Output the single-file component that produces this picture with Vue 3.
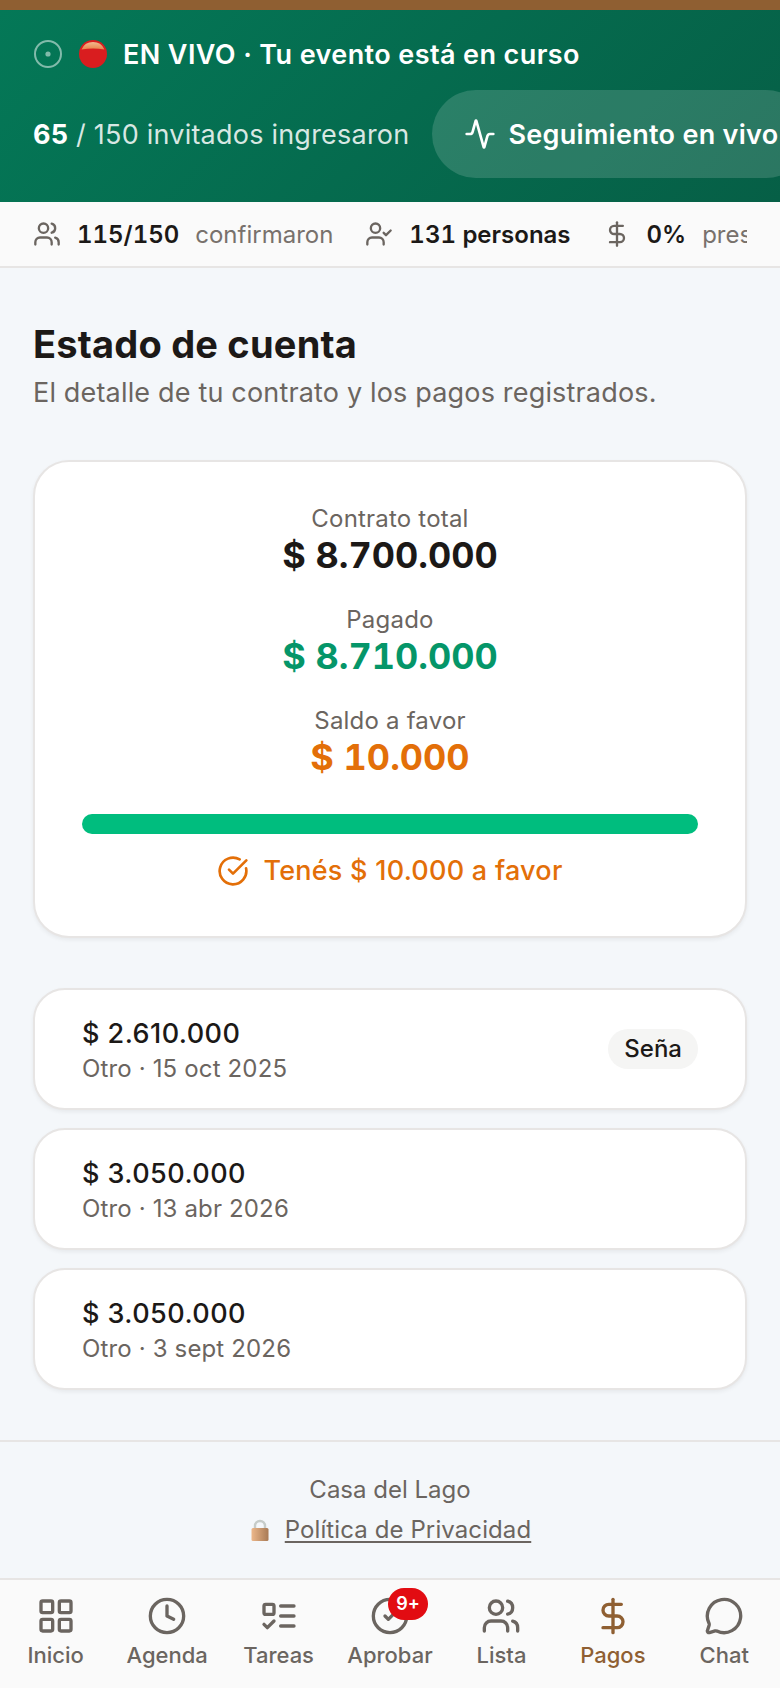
<template>
  <div class="page">
    <div class="topline"></div>
    <header class="live">
      <div class="live__row">
        <svg class="live__dot" viewBox="0 0 30 30" width="30" height="30"><circle cx="15" cy="15" r="13" fill="none" stroke="#fff" stroke-opacity=".5" stroke-width="2"/><circle cx="15" cy="15" r="2.6" fill="#fff" fill-opacity=".5"/></svg>
        <svg class="live__ball" viewBox="0 0 28 28" width="28" height="28">
          <defs>
            <linearGradient id="cap" x1="0" y1="0" x2="0" y2="1">
              <stop offset="0" stop-color="#f2b98e"/>
              <stop offset="1" stop-color="#e9824a"/>
            </linearGradient>
          </defs>
          <circle cx="14" cy="14" r="14" fill="#d91d1f"/>
          <path d="M2.5 9.5A12.6 12.6 0 0 1 25.5 9.5Q14 7.5 2.5 9.5Z" fill="url(#cap)"/>
        </svg>
        <span class="live__title">EN VIVO · Tu evento está en curso</span>
      </div>
      <div class="live__row live__row--second">
        <span class="live__count"><b>65</b> / 150 invitados ingresaron</span>
        <div class="live__btn">
          <svg viewBox="0 0 24 24" width="32" height="32" fill="none" stroke="#fff" stroke-width="2" stroke-linecap="round" stroke-linejoin="round"><path d="M22 12h-2.48a2 2 0 0 0-1.93 1.46l-2.35 8.36a.25.25 0 0 1-.48 0L9.24 2.18a.25.25 0 0 0-.48 0l-2.35 8.36A2 2 0 0 1 4.49 12H2"/></svg>
          <span>Seguimiento en vivo</span>
        </div>
      </div>
    </header>

    <div class="stats">
      <div class="stats__inner">
        <div class="stat">
          <svg viewBox="0 0 24 24" width="28" height="28" class="stat__icon"><path d="M16 21v-2a4 4 0 0 0-4-4H6a4 4 0 0 0-4 4v2"/><circle cx="9" cy="7" r="4"/><path d="M22 21v-2a4 4 0 0 0-3-3.87"/><path d="M16 3.13a4 4 0 0 1 0 7.75"/></svg>
          <b>115/150</b><span>confirmaron</span>
        </div>
        <div class="stat">
          <svg viewBox="0 0 24 24" width="28" height="28" class="stat__icon"><path d="M16 21v-2a4 4 0 0 0-4-4H6a4 4 0 0 0-4 4v2"/><circle cx="9" cy="7" r="4"/><path d="m16 11 2 2 4-4"/></svg>
          <b>131 personas</b>
        </div>
        <div class="stat">
          <svg viewBox="0 0 24 24" width="28" height="28" class="stat__icon"><line x1="12" y1="2" x2="12" y2="22"/><path d="M17 5H9.5a3.5 3.5 0 0 0 0 7h5a3.5 3.5 0 0 1 0 7H6"/></svg>
          <b>0%</b><span>presupuesto</span>
        </div>
      </div>
    </div>

    <main class="content">
      <h1 class="content__title">Estado de cuenta</h1>
      <p class="content__sub">El detalle de tu contrato y los pagos registrados.</p>

      <section class="summary">
        <div class="summary__item">
          <div class="summary__label">Contrato total</div>
          <div class="summary__value">$ 8.700.000</div>
        </div>
        <div class="summary__item">
          <div class="summary__label">Pagado</div>
          <div class="summary__value is-green">$ 8.710.000</div>
        </div>
        <div class="summary__item">
          <div class="summary__label">Saldo a favor</div>
          <div class="summary__value is-orange">$ 10.000</div>
        </div>
        <div class="summary__bar"></div>
        <div class="summary__note">
          <svg viewBox="0 0 24 24" width="32" height="32" fill="none" stroke="#e36f08" stroke-width="2" stroke-linecap="round" stroke-linejoin="round"><path d="M21.8 10A10 10 0 1 1 17 3.34"/><path d="m9 11 3 3L22 4"/></svg>
          <span>Tenés $ 10.000 a favor</span>
        </div>
      </section>

      <section class="payments">
        <div v-for="p in payments" :key="p.date" class="payment">
          <div>
            <div class="payment__amount">{{ p.amount }}</div>
            <div class="payment__meta">Otro · {{ p.date }}</div>
          </div>
          <span v-if="p.tag" class="payment__tag">{{ p.tag }}</span>
        </div>
      </section>
    </main>

    <footer class="foot">
      <div>Casa del Lago</div>
      <div class="foot__link">
        <svg viewBox="0 0 18 22" width="18" height="22">
          <defs>
            <linearGradient id="lock" x1="0" y1="0" x2="1" y2="0">
              <stop offset="0" stop-color="#ecb78a"/>
              <stop offset="1" stop-color="#a87a55"/>
            </linearGradient>
          </defs>
          <path d="M4 11V7a5 5 0 0 1 10 0v4" fill="none" stroke="#c6ccc9" stroke-width="2.4"/>
          <rect x="0.5" y="9" width="17" height="13" rx="1.5" fill="url(#lock)"/>
        </svg>
        <a>Política de Privacidad</a>
      </div>
    </footer>

    <nav class="nav">
      <div v-for="item in nav" :key="item.label" class="nav__item" :class="{ 'is-active': item.active }">
        <div class="nav__icon">
          <svg viewBox="0 0 24 24" width="40" height="40" fill="none" stroke="currentColor" stroke-width="2" stroke-linecap="round" stroke-linejoin="round" v-html="item.icon"></svg>
          <span v-if="item.badge" class="nav__badge">{{ item.badge }}</span>
        </div>
        <span class="nav__label">{{ item.label }}</span>
      </div>
    </nav>
  </div>
</template>

<script setup>
const payments = [
  { amount: '$ 2.610.000', date: '15 oct 2025', tag: 'Seña' },
  { amount: '$ 3.050.000', date: '13 abr 2026' },
  { amount: '$ 3.050.000', date: '3 sept 2026' }
];

const nav = [
  { label: 'Inicio', icon: '<rect x="3" y="3" width="7" height="7" rx="1"/><rect x="14" y="3" width="7" height="7" rx="1"/><rect x="3" y="14" width="7" height="7" rx="1"/><rect x="14" y="14" width="7" height="7" rx="1"/>' },
  { label: 'Agenda', icon: '<circle cx="12" cy="12" r="10"/><path d="M12 6v6l4 2"/>' },
  { label: 'Tareas', icon: '<rect x="3" y="5" width="6" height="6" rx="1"/><path d="m3 17 2 2 4-4"/><path d="M13 6h8"/><path d="M13 12h8"/><path d="M13 18h8"/>' },
  { label: 'Aprobar', badge: '9+', icon: '<circle cx="12" cy="12" r="10"/><path d="m9 12 2 2 4-4"/>' },
  { label: 'Lista', icon: '<path d="M16 21v-2a4 4 0 0 0-4-4H6a4 4 0 0 0-4 4v2"/><circle cx="9" cy="7" r="4"/><path d="M22 21v-2a4 4 0 0 0-3-3.87"/><path d="M16 3.13a4 4 0 0 1 0 7.75"/>' },
  { label: 'Pagos', active: true, icon: '<line x1="12" y1="2" x2="12" y2="22"/><path d="M17 5H9.5a3.5 3.5 0 0 0 0 7h5a3.5 3.5 0 0 1 0 7H6"/>' },
  { label: 'Chat', icon: '<path d="M2.992 16.342a2 2 0 0 1 .094 1.167l-1.065 3.29a1 1 0 0 0 1.236 1.168l3.413-.998a2 2 0 0 1 1.099.092 10 10 0 1 0-4.777-4.719"/>' }
];
</script>

<style>
html, body {
  margin: 0;
  background: #f4f7fa;
}
</style>

<style scoped>
.page {
  width: 780px;
  height: 1688px;
  overflow: hidden;
  display: flex;
  flex-direction: column;
  background: #f4f7fa;
  font-family: Inter, "Noto Sans", sans-serif;
  color: #1c1917;
}
.topline {
  height: 10px;
  background: #8f5f32;
}
.live {
  height: 192px;
  box-sizing: border-box;
  padding: 29px 0 0 33px;
  background: linear-gradient(135deg, #047857 0%, #065f46 100%);
  color: #fff;
  overflow: hidden;
}
.live__row {
  display: flex;
  align-items: center;
  gap: 16px;
  height: 30px;
}
.live__title {
  font-size: 27px;
  font-weight: 600;
  letter-spacing: 0.4px;
}
.live__row--second {
  margin-top: 21px;
  height: 88px;
  gap: 23px;
  white-space: nowrap;
}
.live__count {
  font-size: 27px;
  letter-spacing: 0.22px;
  color: rgba(255, 255, 255, 0.85);
}
.live__count b {
  color: #fff;
  font-weight: 700;
}
.live__btn {
  display: flex;
  align-items: center;
  gap: 12px;
  height: 88px;
  padding: 0 32px;
  border-radius: 44px;
  flex-shrink: 0;
  background: rgba(255, 255, 255, 0.15);
  font-size: 27px;
  font-weight: 600;
  letter-spacing: 0.3px;
}
.stats {
  height: 66px;
  box-sizing: border-box;
  padding: 0 33px;
  background: #fafafa;
  border-bottom: 2px solid #e7e5e4;
  flex-shrink: 0;
}
.stats__inner {
  display: flex;
  align-items: center;
  gap: 32px;
  height: 100%;
  overflow: hidden;
  white-space: nowrap;
}
.stat {
  display: flex;
  align-items: center;
  font-size: 24px;
  flex-shrink: 0;
}
.stat b {
  font-weight: 600;
  margin-left: 16px;
  font-variant-numeric: tabular-nums;
}
.stat span {
  color: #78716c;
  margin-left: 16px;
}
.stat__icon {
  fill: none;
  stroke: #6b6560;
  stroke-width: 2;
  stroke-linecap: round;
  stroke-linejoin: round;
}
.content {
  flex: 1;
  padding: 53px 33px 0;
}
.content__title {
  margin: 0;
  font-size: 38px;
  font-weight: 700;
  line-height: 46px;
  letter-spacing: 0.2px;
}
.content__sub {
  margin: 6px 0 0;
  font-size: 27px;
  line-height: 40px;
  letter-spacing: 0.17px;
  color: #6b6560;
}
.summary {
  margin-top: 47px;
  height: 478px;
  box-sizing: border-box;
  padding: 41px 47px 0;
  background: #fff;
  border: 2px solid #e7e5e4;
  border-radius: 36px;
  box-shadow: 0 2px 4px rgba(0, 0, 0, 0.06);
  text-align: center;
}
.summary__item + .summary__item {
  margin-top: 28px;
}
.summary__label {
  font-size: 24px;
  line-height: 31px;
  letter-spacing: 0.2px;
  color: #6b6560;
}
.summary__value {
  font-size: 36px;
  line-height: 42px;
  font-weight: 700;
  font-variant-numeric: tabular-nums;
}
.is-green {
  color: #059669;
}
.is-orange {
  color: #e36f08;
}
.summary__bar {
  height: 20px;
  margin-top: 36px;
  border-radius: 10px;
  background: #00bd7e;
}
.summary__note {
  display: flex;
  align-items: center;
  justify-content: center;
  gap: 14px;
  margin-top: 20px;
  font-size: 27px;
  font-weight: 500;
  letter-spacing: 0.25px;
  color: #e36f08;
}
.payments {
  display: flex;
  flex-direction: column;
  gap: 18px;
  margin-top: 50px;
}
.payment {
  display: flex;
  align-items: center;
  justify-content: space-between;
  height: 122px;
  box-sizing: border-box;
  padding: 4px 47px 0;
  background: #fff;
  border: 2px solid #e7e5e4;
  border-radius: 32px;
  box-shadow: 0 2px 4px rgba(0, 0, 0, 0.06);
}
.payment__amount {
  font-size: 27px;
  line-height: 36px;
  font-weight: 500;
  letter-spacing: 0.45px;
}
.payment__meta {
  font-size: 24px;
  line-height: 34px;
  letter-spacing: 0.15px;
  color: #6b6560;
}
.payment__tag {
  padding: 0 16px;
  height: 40px;
  line-height: 40px;
  border-radius: 20px;
  background: #f5f5f4;
  font-size: 24px;
  font-weight: 500;
  margin-top: -4px;
}
.foot {
  height: 138px;
  box-sizing: border-box;
  padding-top: 28px;
  border-top: 2px solid #e7e5e4;
  text-align: center;
  font-size: 24px;
  line-height: 40px;
  color: #6b6560;
  flex-shrink: 0;
}
.foot__link {
  display: flex;
  align-items: center;
  justify-content: center;
  gap: 16px;
  padding-left: 2px;
}
.foot__link a {
  text-decoration: underline;
  text-underline-offset: 3px;
  letter-spacing: 0.1px;
}
.nav {
  height: 110px;
  box-sizing: border-box;
  padding: 16px 0 0 0;
  display: grid;
  grid-template-columns: repeat(7, 1fr);
  background: #fafafa;
  border-top: 2px solid #e7e5e4;
  flex-shrink: 0;
  color: #6b6560;
}
.nav__item {
  display: flex;
  flex-direction: column;
  align-items: center;
}
.nav__item.is-active {
  color: #8f5f32;
}
.nav__icon {
  position: relative;
  height: 40px;
}
.nav__icon svg {
  display: block;
}
.nav__badge {
  position: absolute;
  top: -8px;
  left: 18px;
  min-width: 40px;
  height: 32px;
  line-height: 32px;
  border-radius: 16px;
  text-align: center;
  background: #e20c12;
  color: #fff;
  font-size: 18px;
  font-weight: 600;
}
.nav__label {
  margin-top: 6px;
  font-size: 22px;
  font-weight: 500;
}
</style>
